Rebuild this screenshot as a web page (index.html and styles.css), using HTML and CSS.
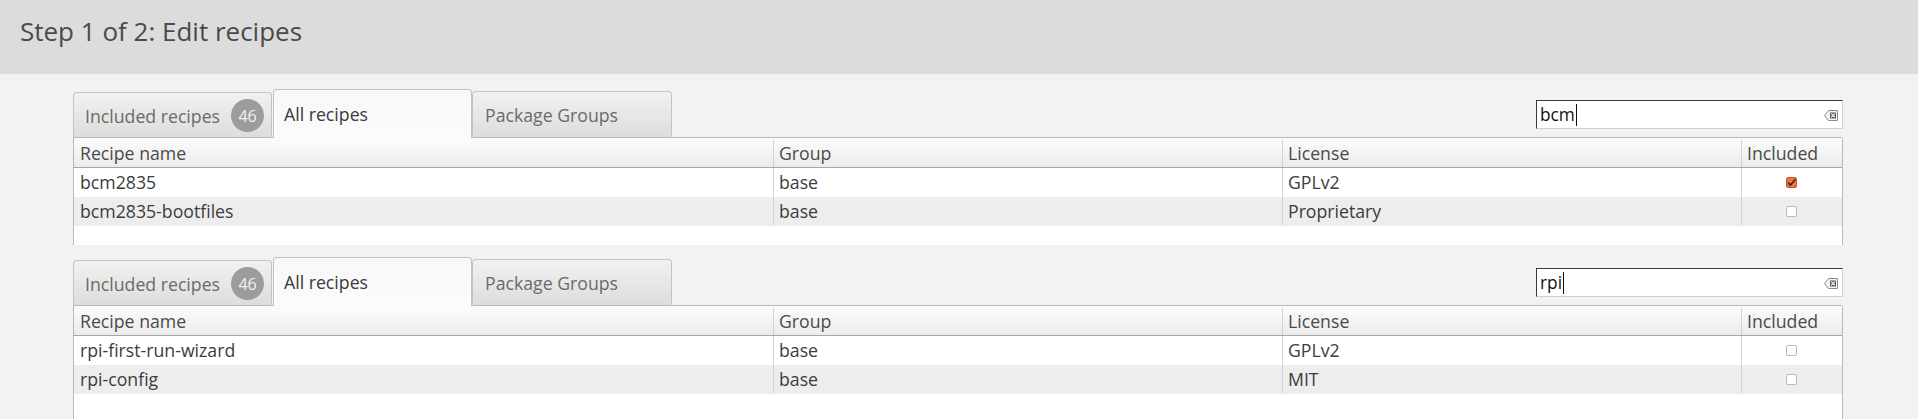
FILE: index.html
```html
<!DOCTYPE html>
<html lang="en">
<head>
<meta charset="utf-8">
<title>Edit recipes</title>
<link rel="stylesheet" href="styles.css">
</head>
<body>
<header class="titlebar">
  <h1 class="title">Step 1 of 2: Edit recipes</h1>
</header>
<main class="content">
  <section class="panel">
    <div class="topbar">
      <div class="tabs">
        <div class="tab tab-included">Included recipes <span class="badge">46</span></div>
        <div class="tab tab-active">All recipes</div>
        <div class="tab tab-groups">Package Groups</div>
      </div>
      <div class="search">
        <span class="search-text">bcm</span><span class="caret"></span>
        <svg class="clear-icon" width="14" height="11" viewBox="0 0 14 11"><path d="M4.5 0.5 H13.5 V10.5 H4.5 L0.5 5.5 Z" fill="#f4f4f4" stroke="#8a8a8a"/><rect x="6" y="2.5" width="6" height="6" fill="#5a5a5a"/><path d="M7.2 3.7 L10.8 7.3 M10.8 3.7 L7.2 7.3" stroke="#f4f4f4" stroke-width="1.2"/></svg>
      </div>
    </div>
    <div class="table">
      <div class="row head">
        <div class="cell c1">Recipe name</div>
        <div class="cell c2">Group</div>
        <div class="cell c3">License</div>
        <div class="cell c4">Included</div>
      </div>
      <div class="row odd">
        <div class="cell c1">bcm2835</div>
        <div class="cell c2">base</div>
        <div class="cell c3">GPLv2</div>
        <div class="cell c4 check"><span class="box checked"><svg width="11" height="11" viewBox="0 0 11 11"><path d="M2.2 5.6 L4.4 8 L9.4 2.2" fill="none" stroke="#3a2a22" stroke-width="1.6"/></svg></span></div>
      </div>
      <div class="row even">
        <div class="cell c1">bcm2835-bootfiles</div>
        <div class="cell c2">base</div>
        <div class="cell c3">Proprietary</div>
        <div class="cell c4 check"><span class="box"></span></div>
      </div>
    </div>
  </section>

  <section class="panel panel-second">
    <div class="topbar">
      <div class="tabs">
        <div class="tab tab-included">Included recipes <span class="badge">46</span></div>
        <div class="tab tab-active">All recipes</div>
        <div class="tab tab-groups">Package Groups</div>
      </div>
      <div class="search">
        <span class="search-text">rpi</span><span class="caret"></span>
        <svg class="clear-icon" width="14" height="11" viewBox="0 0 14 11"><path d="M4.5 0.5 H13.5 V10.5 H4.5 L0.5 5.5 Z" fill="#f4f4f4" stroke="#8a8a8a"/><rect x="6" y="2.5" width="6" height="6" fill="#5a5a5a"/><path d="M7.2 3.7 L10.8 7.3 M10.8 3.7 L7.2 7.3" stroke="#f4f4f4" stroke-width="1.2"/></svg>
      </div>
    </div>
    <div class="table table-tall">
      <div class="row head">
        <div class="cell c1">Recipe name</div>
        <div class="cell c2">Group</div>
        <div class="cell c3">License</div>
        <div class="cell c4">Included</div>
      </div>
      <div class="row odd">
        <div class="cell c1">rpi-first-run-wizard</div>
        <div class="cell c2">base</div>
        <div class="cell c3">GPLv2</div>
        <div class="cell c4 check"><span class="box"></span></div>
      </div>
      <div class="row even">
        <div class="cell c1">rpi-config</div>
        <div class="cell c2">base</div>
        <div class="cell c3">MIT</div>
        <div class="cell c4 check"><span class="box"></span></div>
      </div>
    </div>
  </section>
</main>
</body>
</html>
```

FILE: styles.css
```css
html, body {
  margin: 0;
  padding: 0;
}
body {
  width: 1918px;
  height: 419px;
  overflow: hidden;
  background: #f2f2f2;
  font-family: "Open Sans", "Noto Sans", sans-serif;
  font-size: 17.7px;
  color: #3c3c3c;
}
.titlebar {
  height: 74px;
  box-sizing: border-box;
  background: #dcdcdc;
  padding: 13px 0 0 20px;
}
.title {
  margin: 0;
  font-size: 26px;
  font-weight: 400;
  line-height: normal;
  color: #4a4a4a;
}
.content {
  margin: 0 75px 0 73px;
  padding-top: 15px;
}
.panel-second {
  margin-top: 12px;
}
.topbar {
  display: flex;
  justify-content: space-between;
  height: 48px;
}
.tabs {
  display: flex;
  align-items: flex-end;
  gap: 1px;
}
.tab {
  box-sizing: border-box;
  display: flex;
  align-items: center;
  border: 1px solid #c3c3c3;
  border-bottom: none;
  border-radius: 4px 4px 0 0;
  background: linear-gradient(#f1f1f1, #dedddc);
  color: #6a6a6a;
  white-space: nowrap;
}
.tab-included {
  width: 199px;
  height: 45px;
  padding: 1px 0 0 11px;
}
.tab-active {
  width: 199px;
  height: 49px;
  margin-bottom: -1px;
  padding: 0 0 1px 10px;
  background: linear-gradient(#f8f8f8, #fbfbfb);
  color: #3a3a3a;
  position: relative;
  z-index: 1;
}
.tab-groups {
  width: 200px;
  height: 46px;
  padding-left: 12px;
  margin-left: -1px;
}
.badge {
  display: inline-flex;
  align-items: center;
  justify-content: center;
  width: 33px;
  height: 33px;
  margin-left: 11px;
  border-radius: 50%;
  background: #9c9c9c;
  color: #f2f2f2;
  font-size: 16px;
}
.search {
  box-sizing: border-box;
  width: 307px;
  height: 29px;
  margin-top: 11px;
  display: flex;
  align-items: center;
  padding: 0 4px 0 3px;
  background: #ffffff;
  border-top: 1px solid #3a3a3a;
  border-left: 1px solid #3a3a3a;
  border-right: 1px solid #cfcfcf;
  border-bottom: 1px solid #cfcfcf;
  color: #111;
  font-size: 17.3px;
}
.caret {
  width: 1px;
  height: 22px;
  margin-left: 1px;
  background: #111;
}
.clear-icon {
  margin-left: auto;
  margin-top: 2px;
}
.table {
  box-sizing: border-box;
  height: 108px;
  background: #ffffff;
  border: 1px solid #b9b9b9;
  border-bottom: none;
  border-radius: 0 3px 0 0;
}
.table-tall {
  height: 130px;
}
.row {
  display: grid;
  grid-template-columns: 699px 509px 459px 1fr;
  height: 29px;
  line-height: 29px;
}
.row.head {
  height: 30px;
  background: linear-gradient(#fcfcfc, #ebebeb);
  border-bottom: 1px solid #a6a6a6;
  box-sizing: border-box;
  line-height: 26px;
  padding-top: 2px;
  color: #4a4a4a;
}
.row.odd { background: #ffffff; }
.row.even { background: #ededed; }
.cell {
  white-space: nowrap;
  overflow: hidden;
  padding-left: 5px;
}
.cell.c1 { padding-left: 6px; }
.cell.c2, .cell.c3, .cell.c4 {
  border-left: 1px solid #d6d6d6;
}
.row.head .cell.c2, .row.head .cell.c3, .row.head .cell.c4 {
  border-left-color: #d2d2d2;
}
.cell.check {
  display: flex;
  align-items: center;
  justify-content: center;
  padding-left: 0;
  padding-right: 1px;
}
.box {
  box-sizing: border-box;
  width: 11px;
  height: 11px;
  border: 1px solid #b8b8b8;
  border-radius: 2px;
  background: #ffffff;
  display: flex;
}
.box.checked {
  border-color: #c85a2c;
  background: #e8743f;
}
.box.checked svg {
  margin: -1px;
}
```
